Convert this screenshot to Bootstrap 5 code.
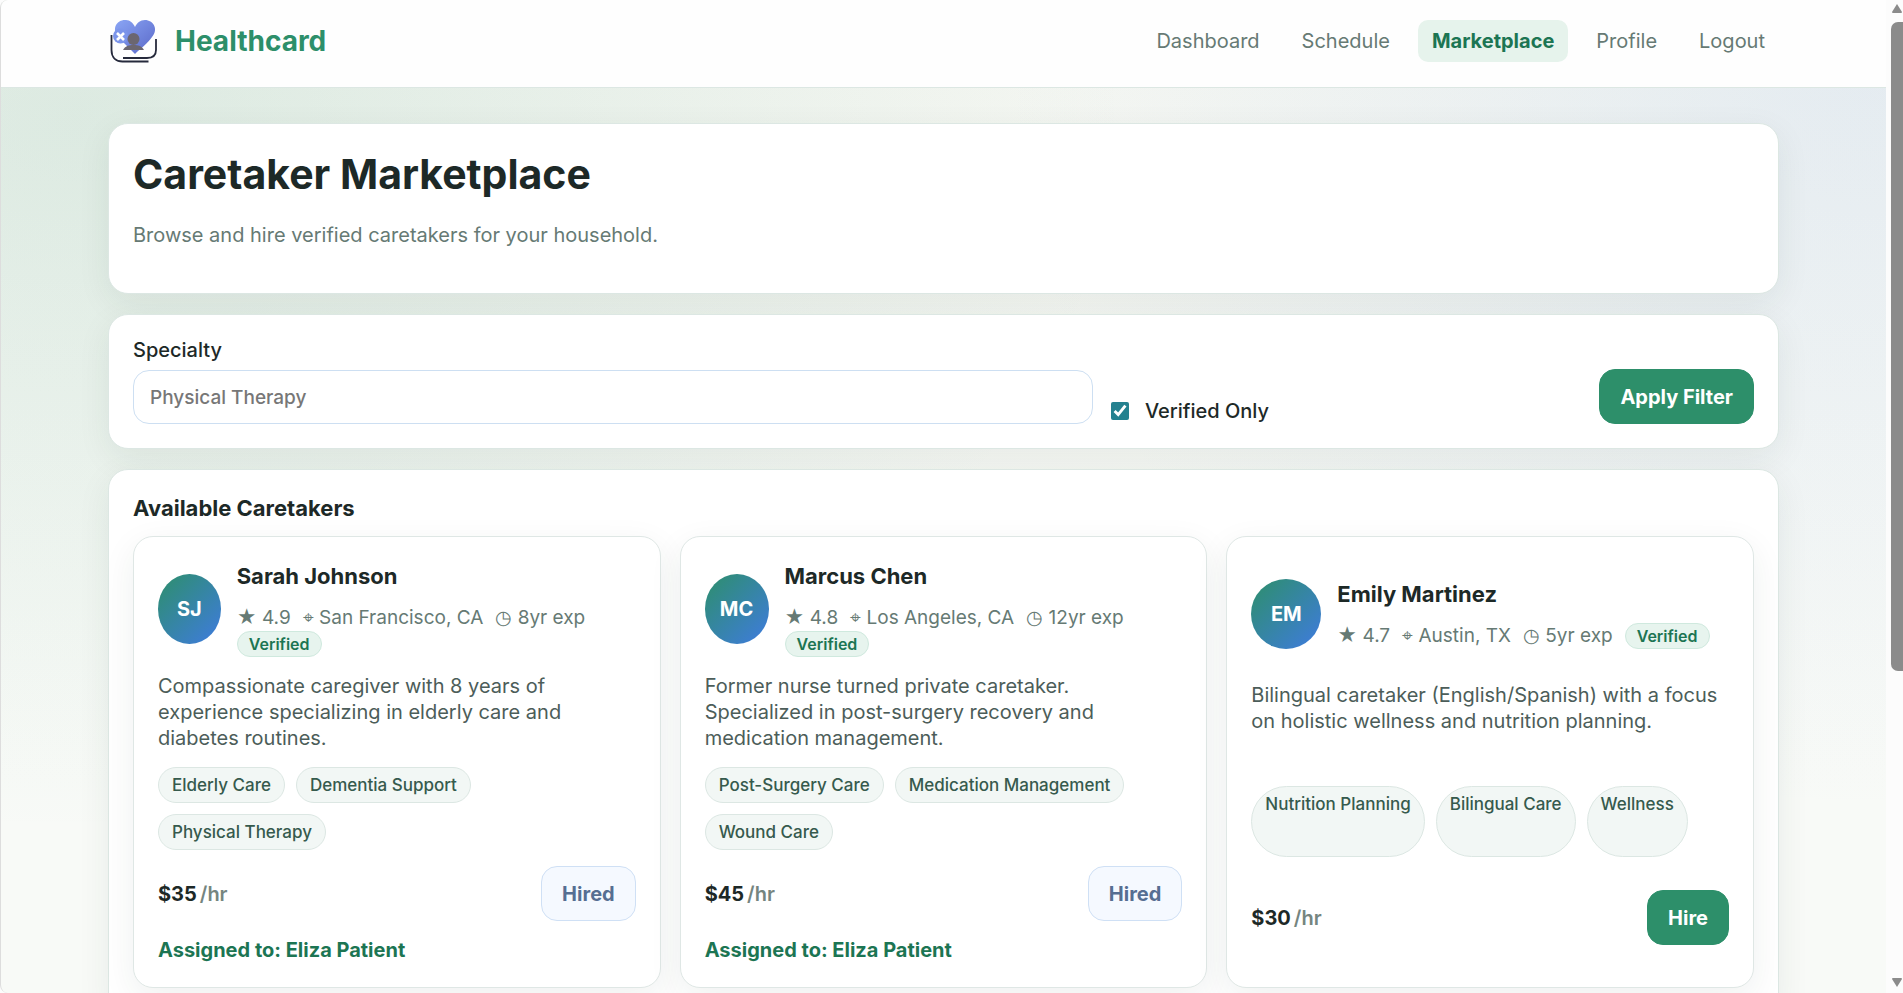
<!DOCTYPE html>
<html lang="en">
<head>
<meta charset="utf-8">
<meta name="viewport" content="width=device-width, initial-scale=1">
<title>Healthcard – Caretaker Marketplace</title>
<link rel="stylesheet" href="https://cdn.jsdelivr.net/npm/bootstrap@5.3.0/dist/css/bootstrap.min.css">
<style>
:root{--green:#2d8f6a;--green-dark:#1c7553;--ink:#1d2927;--muted-ink:#667a74;--line:#dce7e3}
body{font-family:Inter,sans-serif;font-size:20px;line-height:26px;color:var(--ink);background:#fcfcfc}
.shell{border-left:1px solid #ddd;border-radius:8px 0 0 8px;
  background:radial-gradient(ellipse 56% 72% at 4% 12%,rgba(45,143,106,.12),transparent 100%),radial-gradient(ellipse 46% 74% at 99% 8%,rgba(90,140,230,.1),transparent 100%),linear-gradient(#f4f6f1,#f8faf7 80%)}
.wrap{width:calc(100% - 214px);min-width:300px}
.topbar{height:88px;background:#fefefe;border-bottom:1px solid var(--line)}
.brand{color:var(--green);font-size:28px;font-weight:700;line-height:34px;text-decoration:none;gap:7px;margin-bottom:5px}
.menu{gap:14px;margin-bottom:5px}
.menu .nav-link{padding:8px 14px;border-radius:10px;color:var(--muted-ink)}
.menu .nav-link.active{background:#e6f3ec;color:var(--green-dark);font-weight:700}
.content{gap:20px;padding-top:35px}
.panel,.carer{background:#fff;border:1px solid var(--line);border-radius:20px;box-shadow:0 10px 34px rgba(30,50,40,.07)}
.panel{padding:24px}
.page-title{font-size:41px;line-height:52px;font-weight:700;margin-bottom:22px}
.section-title{font-size:22px;line-height:28px;font-weight:700;margin-bottom:14px}
.soft{color:var(--muted-ink)}
.hero{min-height:171px}
.filter{grid-template-columns:960px 1fr auto;column-gap:18px;padding-top:22px}
.filter label{font-weight:500}
.field{height:54px;border:1px solid #cddff2;border-radius:16px;padding:0 16px;width:100%;font-size:19px;font-weight:500;color:var(--ink)}
.field::placeholder{color:#777;opacity:1}
.field-label{margin-bottom:7px}
.tick{width:18px;height:18px;accent-color:#24818f;margin:0}
.action{height:55px;border-radius:16px;padding:0 20px;font-weight:700;font-size:20px;color:#fff;background:var(--green);border:1px solid var(--green)}
.action:hover{background:var(--green-dark);color:#fff}
.action.taken,.action.taken:disabled{background:#f5f9ff;border-color:#cfe0f5;color:#566e92;opacity:1}
.carers{grid-template-columns:repeat(auto-fit,minmax(440px,1fr));gap:19px}
.carer{padding:24px;row-gap:16px;border-color:#dfe7e5}
.portrait{width:70px;height:70px;border-radius:50%;color:#fff;font-weight:700;background:linear-gradient(135deg,#2d8f6a,#3f7be0)}
.who{min-width:0}
.who h3{font-size:22px;line-height:30px;font-weight:700;margin-bottom:14px}
.facts{font-size:19px;color:var(--muted-ink);column-gap:12px}
.check-pill{font-size:16px;line-height:20px;font-weight:600;color:var(--green-dark);background:#e7f4ee;border:1px solid #cfe9de;border-radius:14px;padding:2px 11px}
.bio{color:#4c5d59}
.skills{gap:11px}
.skills li{font-size:17px;line-height:22px;font-weight:500;color:#365a4d;background:#f2f7f5;border:1px solid var(--line);border-radius:36px;padding:6px 13px}
.per{color:#75857f;font-weight:600;margin-left:3px}
.given{color:var(--green-dark);font-weight:700}
.rail{width:17px;padding:4px 0 6px 5px;background:#fcfcfc}
.rail i{display:block;height:66%;width:20px;border-radius:7px;background:#8b8b8b;margin-top:9px}
</style>
</head>
<body>
<div class="d-flex vh-100 overflow-hidden">
<div class="shell flex-grow-1 overflow-hidden">
  <header class="topbar d-flex">
    <div class="wrap mx-auto d-flex align-items-center justify-content-between">
      <a href="#" class="brand d-flex align-items-center">
        <svg width="60" height="60" viewBox="4 0 60 60" aria-hidden="true">
          <defs><linearGradient id="heart" x1="0" y1="0" x2="1" y2="1"><stop offset="0" stop-color="#8aa5f5"/><stop offset="1" stop-color="#5a68c8"/></linearGradient></defs>
          <path d="M31 43 15 27C6 17 14 8 22 9c4 0 7 3 9 7 2-4 5-7 10-7 8 0 14 9 7 17-4 6-12 12-17 17Z" fill="url(#heart)"/>
          <circle cx="16.500" cy="25" r="7.500" fill="#7c95ea"/>
          <path d="m13 22 7 7m0-7-7 7" stroke="#fff" stroke-width="2.600"/>
          <circle cx="29.500" cy="28" r="6" fill="#6b6670"/>
          <path d="M19 39c2-4 6-5 10.500-5S38 35 40 39Z" fill="#6b6670"/>
          <path d="M7.500 24v15c0 8 5 11.500 11 11.500h26M52 28v11c0 5-3 8-9 8H19" fill="none" stroke="#262a3c" stroke-width="1.800"/>
        </svg>
        <span>Healthcard</span>
      </a>
      <nav class="menu nav" aria-label="Main">
        <a class="nav-link" href="#">Dashboard</a>
        <a class="nav-link" href="#">Schedule</a>
        <a class="nav-link active" aria-current="page" href="#">Marketplace</a>
        <a class="nav-link" href="#">Profile</a>
        <a class="nav-link" href="#">Logout</a>
      </nav>
    </div>
  </header>
  <main class="content wrap mx-auto d-grid">
    <section class="panel hero">
      <h1 class="page-title">Caretaker Marketplace</h1>
      <p class="soft mb-0">Browse and hire verified caretakers for your household.</p>
    </section>
    <form class="panel filter d-grid align-items-end">
      <div>
        <label for="specialty" class="field-label d-block">Specialty</label>
        <input id="specialty" class="field" type="text" placeholder="Physical Therapy">
      </div>
      <div class="d-flex align-items-center gap-3">
        <input id="verified" class="tick" type="checkbox" checked>
        <label for="verified">Verified Only</label>
      </div>
      <button type="button" class="btn action">Apply Filter</button>
    </form>
    <section class="panel">
      <h2 class="section-title">Available Caretakers</h2>
      <div class="carers d-grid">
        <article class="carer d-grid">
          <div class="d-flex align-items-center gap-3">
            <div class="portrait d-flex align-items-center justify-content-center">SJ</div>
            <div class="who">
              <h3>Sarah Johnson</h3>
              <div class="facts d-flex flex-wrap align-items-center"><span>★ 4.9</span><span>⌖ San Francisco, CA</span><span>◷ 8yr exp</span><span class="check-pill">Verified</span></div>
            </div>
          </div>
          <p class="bio mb-0">Compassionate caregiver with 8 years of experience specializing in elderly care and diabetes routines.</p>
          <ul class="skills d-flex flex-wrap list-unstyled mb-0"><li>Elderly Care</li><li>Dementia Support</li><li>Physical Therapy</li></ul>
          <div class="d-flex align-items-center justify-content-between">
            <div><strong>$35</strong><span class="per">/hr</span></div>
            <button type="button" class="btn action taken" disabled>Hired</button>
          </div>
          <div class="given">Assigned to: Eliza Patient</div>
        </article>
        <article class="carer d-grid">
          <div class="d-flex align-items-center gap-3">
            <div class="portrait d-flex align-items-center justify-content-center">MC</div>
            <div class="who">
              <h3>Marcus Chen</h3>
              <div class="facts d-flex flex-wrap align-items-center"><span>★ 4.8</span><span>⌖ Los Angeles, CA</span><span>◷ 12yr exp</span><span class="check-pill">Verified</span></div>
            </div>
          </div>
          <p class="bio mb-0">Former nurse turned private caretaker. Specialized in post-surgery recovery and medication management.</p>
          <ul class="skills d-flex flex-wrap list-unstyled mb-0"><li>Post-Surgery Care</li><li>Medication Management</li><li>Wound Care</li></ul>
          <div class="d-flex align-items-center justify-content-between">
            <div><strong>$45</strong><span class="per">/hr</span></div>
            <button type="button" class="btn action taken" disabled>Hired</button>
          </div>
          <div class="given">Assigned to: Eliza Patient</div>
        </article>
        <article class="carer d-grid">
          <div class="d-flex align-items-center gap-3">
            <div class="portrait d-flex align-items-center justify-content-center">EM</div>
            <div class="who">
              <h3>Emily Martinez</h3>
              <div class="facts d-flex flex-wrap align-items-center"><span>★ 4.7</span><span>⌖ Austin, TX</span><span>◷ 5yr exp</span><span class="check-pill">Verified</span></div>
            </div>
          </div>
          <p class="bio mb-0">Bilingual caretaker (English/Spanish) with a focus on holistic wellness and nutrition planning.</p>
          <ul class="skills d-flex flex-wrap list-unstyled mb-0"><li>Nutrition Planning</li><li>Bilingual Care</li><li>Wellness</li></ul>
          <div class="d-flex align-items-center justify-content-between">
            <div><strong>$30</strong><span class="per">/hr</span></div>
            <button type="button" class="btn action">Hire</button>
          </div>
        </article>
      </div>
    </section>
  </main>
</div>
<div class="rail flex-shrink-0 overflow-hidden d-flex flex-column" aria-hidden="true">
  <svg class="flex-shrink-0" width="12" height="9" viewBox="0 0 12 9"><path d="M6 0 11 8q0 1-1 1H2q-1 0-1-1Z" fill="#8b8b8b"/></svg>
  <i></i>
  <svg class="flex-shrink-0 mt-auto" width="12" height="9" viewBox="0 0 12 9"><path d="M6 9 11 1q0-1-1-1H2q-1 0-1 1Z" fill="#8b8b8b"/></svg>
</div>
</div>
<script src="https://cdn.jsdelivr.net/npm/bootstrap@5.3.0/dist/js/bootstrap.bundle.min.js"></script>
</body>
</html>
